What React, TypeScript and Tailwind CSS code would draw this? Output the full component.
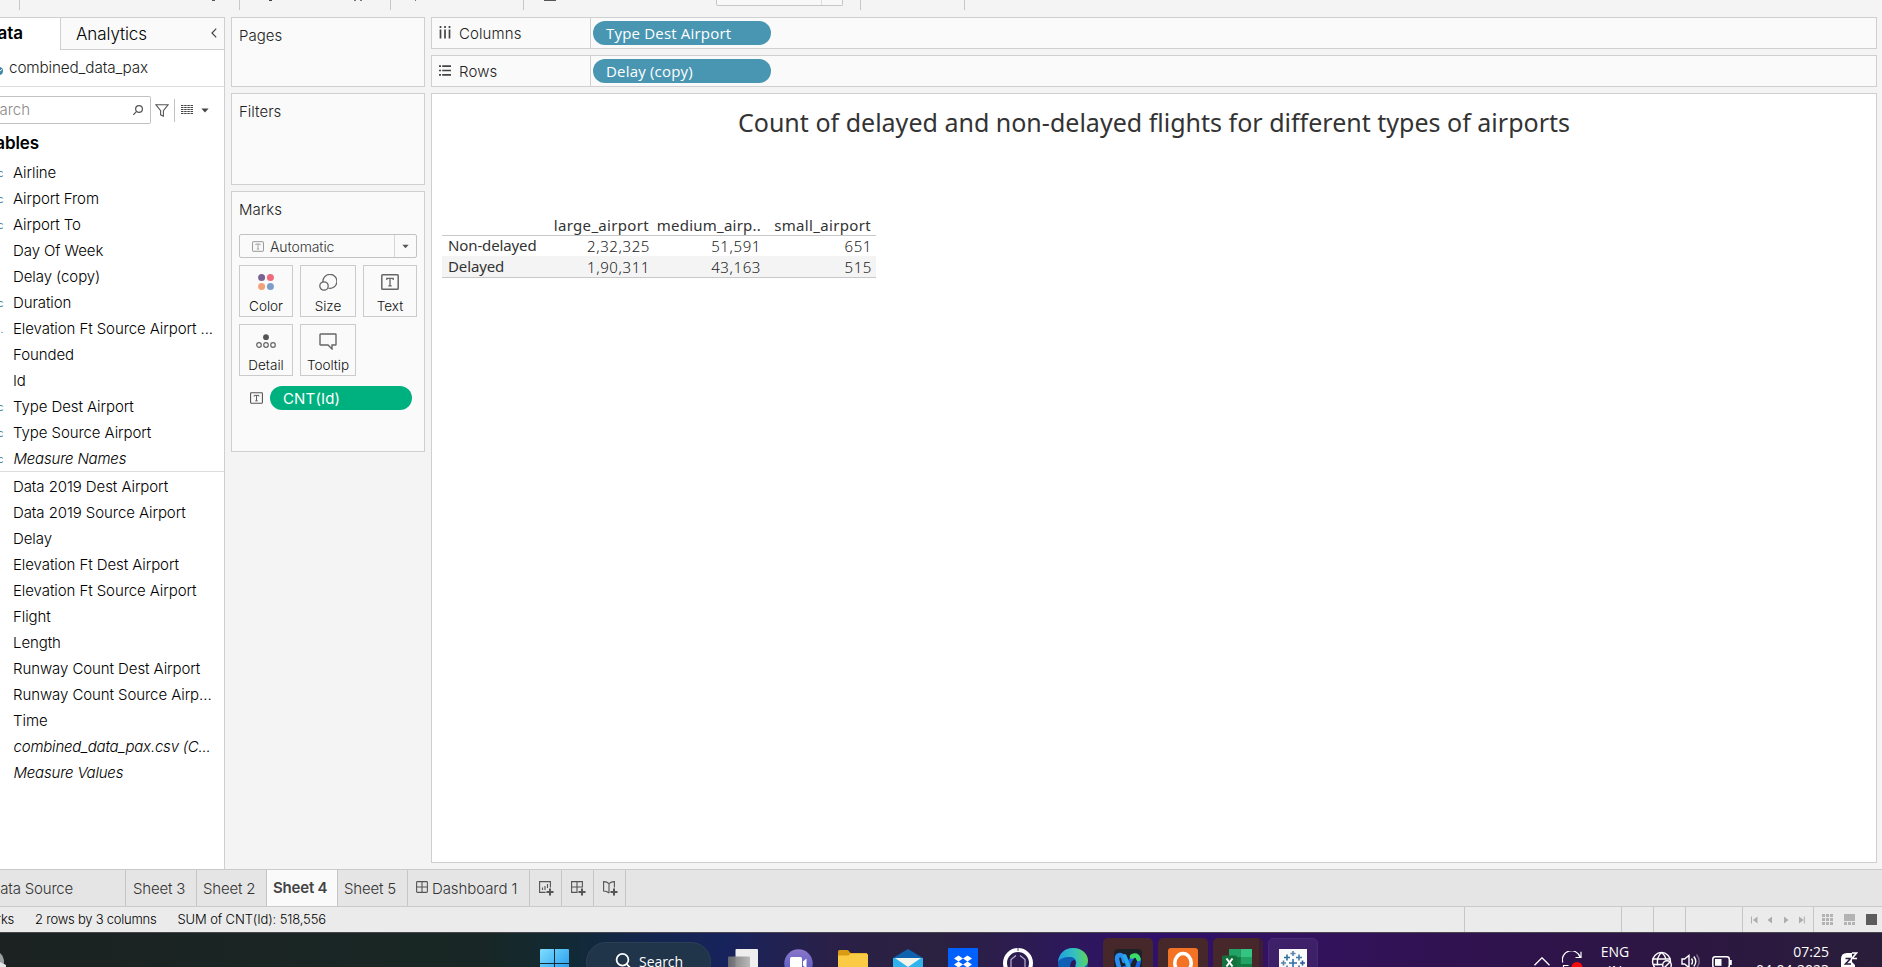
import type { ReactNode } from 'react';

type Field = { name: string; mark?: string; italic?: boolean };

const dimensions: Field[] = [
  { name: 'Airline', mark: 'Abc' },
  { name: 'Airport From', mark: 'Abc' },
  { name: 'Airport To', mark: 'Abc' },
  { name: 'Day Of Week' },
  { name: 'Delay (copy)' },
  { name: 'Duration', mark: 'Abc' },
  { name: 'Elevation Ft Source Airport ...', mark: '.' },
  { name: 'Founded' },
  { name: 'Id' },
  { name: 'Type Dest Airport', mark: 'Abc' },
  { name: 'Type Source Airport', mark: 'Abc' },
  { name: 'Measure Names', mark: 'Abc', italic: true },
];

const measures: Field[] = [
  { name: 'Data 2019 Dest Airport' },
  { name: 'Data 2019 Source Airport' },
  { name: 'Delay' },
  { name: 'Elevation Ft Dest Airport' },
  { name: 'Elevation Ft Source Airport' },
  { name: 'Flight' },
  { name: 'Length' },
  { name: 'Runway Count Dest Airport' },
  { name: 'Runway Count Source Airp...' },
  { name: 'Time' },
  { name: 'combined_data_pax.csv (C...', italic: true },
  { name: 'Measure Values', italic: true },
];

function FieldRow({ name, mark, italic }: Field) {
  return (
    <div className="flex h-[26px] items-center pt-[2px] whitespace-nowrap">
      <span className="flex w-[3.5px] shrink-0 justify-end text-[10px] text-[#3f7d98]">{mark}</span>
      <span
        className={
          italic
            ? 'ml-[10px] text-[15px] font-light italic tracking-[-0.2px] text-black'
            : 'ml-[9.5px] text-[15px] font-light tracking-[-0.08px] text-black'
        }
      >
        {name}
      </span>
    </div>
  );
}

function TextMark({ className, color }: { className: string; color: string }) {
  return (
    <svg viewBox="0 0 18 16" className={className} fill="none" stroke={color}>
      <rect x="0.8" y="0.8" width="16.4" height="14.4" rx="0.8" strokeWidth="1.5" />
      <path d="M5.8 6V4.4h6.4V6M9 4.4v7.4M7.3 11.9h3.4" strokeWidth="1.3" />
    </svg>
  );
}

function MarkButton({ label, wide, children }: { label: string; wide?: boolean; children: ReactNode }) {
  return (
    <div
      className={
        (wide ? 'w-[56px]' : 'w-[54px]') +
        ' flex h-[52px] flex-col items-center border border-[#cbcbcb] bg-[#fafafa]'
      }
    >
      <div className="flex h-[32px] items-center">{children}</div>
      <div className="text-[13.5px] leading-[17px] font-light text-[#111]">{label}</div>
    </div>
  );
}

function Shelf({ label, pill, icon }: { label: string; pill: string; icon: ReactNode }) {
  return (
    <div className="flex h-[32px] border border-[#cfcfcf] bg-[#fafafa]">
      <div className="flex w-[159px] items-center border-r border-[#cfcfcf] pl-[7px]">
        {icon}
        <span className="ml-[8px] pt-[2px] text-[15px] font-light tracking-[0.1px] text-[#222]">{label}</span>
      </div>
      <div className="ml-[2px] mt-[3px] flex h-[24px] w-[178px] items-center rounded-full bg-[#4996b2] pl-[13px] pt-px font-['Open_Sans'] text-[15px] tracking-[0.19px] text-white">
        {pill}
      </div>
    </div>
  );
}

function SheetTab({ label, width }: { label: string; width: string }) {
  return (
    <div className={width + ' flex shrink-0 items-center border-r border-[#c6c6c6] pt-[2px]'}>{label}</div>
  );
}

function Slot({ children, tile }: { children: ReactNode; tile?: string }) {
  return (
    <div className={(tile ?? '') + ' flex h-[50px] w-[50px] shrink-0 justify-center rounded-[5px] pt-[10px]'}>
      {children}
    </div>
  );
}

function Plus({ x, y, s, color }: { x: number; y: number; s: number; color: string }) {
  return <path d={`M${x - s} ${y}H${x + s}M${x} ${y - s}V${y + s}`} stroke={color} strokeWidth="1.6" />;
}

function ToolbarStrip() {
  return (
    <div className="flex h-[17px] shrink-0 items-start">
      <div className="h-[10px] w-[20px] border-r border-[#c8c8c8]" />
      <div className="ml-[192px] h-px w-[3px] bg-[#555]" />
      <div className="h-[10px] w-[25px] border-r border-[#c8c8c8]" />
      <div className="ml-[29px] h-px w-[3px] bg-[#444]" />
      <div className="ml-[82px] h-px w-[2px] bg-[#777]" />
      <div className="ml-[4px] h-px w-[2px] bg-[#777]" />
      <div className="h-[10px] w-[29px] border-r border-[#c8c8c8]" />
      <div className="ml-[24px] h-px w-px bg-[#777]" />
      <div className="h-[10px] w-[108px] border-r border-[#c8c8c8]" />
      <div className="ml-[20px] h-px w-[12px] bg-[#555]" />
      <div className="ml-[160px] flex h-[6px] w-[127px] rounded-b-[2px] border border-t-0 border-[#c6c6c6] bg-[#f8f8f8]">
        <div className="w-[105px] border-r border-[#ddd]" />
      </div>
      <div className="h-[10px] w-[18px] border-r border-[#c8c8c8]" />
      <div className="h-[10px] w-[104px] border-r border-[#c8c8c8]" />
    </div>
  );
}

function DataPane() {
  return (
    <div className="flex w-[225px] shrink-0 flex-col overflow-hidden border-t border-r border-[#cfcfcf] bg-white">
      <div className="flex h-[32px] shrink-0">
        <div className="flex w-[60px] items-center">
          <div className="flex w-[23px] justify-end text-[17px] font-semibold text-black">Data</div>
        </div>
        <div className="flex flex-1 items-center justify-between border-b border-l border-[#cfcfcf] bg-[#fafafa] pr-[7px] pl-[15px]">
          <span className="pt-[2px] text-[17px] font-light tracking-[-0.1px] text-black">Analytics</span>
          <svg viewBox="0 0 6 10" className="mb-[1px] h-[10px] w-[6px]" fill="none" stroke="#444" strokeWidth="1.2">
            <path d="M5.2 0.6L1 5l4.2 4.4" />
          </svg>
        </div>
      </div>
      <div className="flex h-[37px] shrink-0 items-center border-b border-[#dcdcdc]">
        <svg viewBox="0 0 4 8" className="mt-[5px] h-[8px] w-[4px]">
          <circle cx="-1" cy="4" r="4" fill="#3f87a6" />
          <path d="M0 4l2-1.6" stroke="#fff" />
        </svg>
        <span className="ml-[5px] text-[15.3px] font-light tracking-[-0.15px] text-[#222]">combined_data_pax</span>
      </div>
      <div className="mt-[9px] flex h-[28px] shrink-0 items-center">
        <div className="flex h-[28px] w-[151px] items-center rounded-r-[2px] border border-l-0 border-[#c2c2c2]">
          <div className="flex w-[30px] justify-end text-[15px] font-light text-[#8a8a8a]">Search</div>
          <svg viewBox="0 0 10 10" className="ml-[103px] h-[10px] w-[10px] overflow-visible" fill="none" stroke="#555" strokeWidth="1.2">
            <circle cx="6" cy="4" r="3.4" />
            <path d="M3.6 6.4L0.3 9.8" />
          </svg>
        </div>
        <svg viewBox="0 0 14 13" className="ml-[3.5px] h-[13px] w-[14px]" fill="none" stroke="#555" strokeWidth="1.1">
          <path d="M0.8 0.7h12.4L8.4 6.6v5.6l-2.8-1.4V6.6z" />
        </svg>
        <div className="ml-[5.5px] h-[23px] w-px bg-[#c2c2c2]" />
        <svg viewBox="0 0 12 10" className="ml-[6px] h-[10px] w-[12px]" stroke="#444" strokeWidth="1">
          <path d="M0 .5h12M0 2.5h12M0 4.5h12M0 6.5h12M0 8.5h12" strokeDasharray="2.5 0.67" />
        </svg>
        <svg viewBox="0 0 8 5" className="ml-[8px] h-[5px] w-[8px]" fill="#444">
          <path d="M0.4 0.4h7.2L4 4.6z" />
        </svg>
      </div>
      <div className="mt-[6px] flex h-[28px] w-[39px] shrink-0 items-center justify-end text-[17px] font-semibold tracking-[-0.1px] text-black">
        Tables
      </div>
      <div className="mt-[1px]">
        {dimensions.map((f) => (
          <FieldRow key={f.name} {...f} />
        ))}
      </div>
      <div className="border-t border-[#dcdcdc] pt-px">
        {measures.map((f) => (
          <FieldRow key={f.name} {...f} />
        ))}
      </div>
    </div>
  );
}

function CardTitle({ children }: { children: ReactNode }) {
  return <div className="text-[15px] leading-[20px] font-light text-[#222]">{children}</div>;
}

function CardsColumn() {
  return (
    <div className="ml-[6px] flex w-[194px] shrink-0 flex-col">
      <div className="h-[70px] border border-[#cfcfcf] bg-[#fafafa] pt-[8px] pl-[7px]">
        <CardTitle>Pages</CardTitle>
      </div>
      <div className="mt-[6px] h-[92px] border border-[#cfcfcf] bg-[#fafafa] pt-[8px] pl-[7px]">
        <CardTitle>Filters</CardTitle>
      </div>
      <div className="mt-[6px] h-[261px] border border-[#cfcfcf] bg-[#fafafa] pt-[8px] pl-[7px]">
        <CardTitle>Marks</CardTitle>
        <div className="mt-[14px] flex h-[24px] w-[178px] items-center rounded-[2px] border border-[#c2c2c2]">
          <TextMark className="ml-[12px] h-[11px] w-[12px]" color="#999" />
          <span className="ml-[6px] flex-1 text-[14px] font-light tracking-[-0.1px] text-[#333]">Automatic</span>
          <div className="flex h-full w-[22px] items-center justify-center border-l border-[#d6d6d6]">
            <svg viewBox="0 0 8 5" className="h-[5px] w-[7px]" fill="#555">
              <path d="M0.4 0.4h7.2L4 4.6z" />
            </svg>
          </div>
        </div>
        <div className="mt-[7px] flex w-[178px] justify-between">
          <MarkButton label="Color">
            <svg viewBox="0 0 16 16" className="h-[16px] w-[16px]">
              <circle cx="3.6" cy="3.6" r="3.5" fill="#7b6391" />
              <circle cx="12.4" cy="3.6" r="3.5" fill="#ee6a7c" />
              <circle cx="3.6" cy="12.4" r="3.5" fill="#f3a178" />
              <circle cx="12.4" cy="12.4" r="3.5" fill="#7b9dc8" />
            </svg>
          </MarkButton>
          <MarkButton label="Size" wide>
            <svg viewBox="0 0 18 17" className="h-[17px] w-[18px]" fill="none" stroke="#666" strokeWidth="1.3">
              <path d="M4 8.4A7 7 0 1 1 9.4 14.2" />
              <circle cx="5" cy="12" r="4.2" />
            </svg>
          </MarkButton>
          <MarkButton label="Text">
            <TextMark className="h-[16px] w-[18px]" color="#666" />
          </MarkButton>
        </div>
        <div className="mt-[7px] flex gap-[7px]">
          <MarkButton label="Detail">
            <svg viewBox="0 0 20 15" className="h-[15px] w-[20px]" fill="none" stroke="#666" strokeWidth="1.2">
              <circle cx="10" cy="3.2" r="2.9" fill="#555" stroke="none" />
              <circle cx="3" cy="11" r="2.3" />
              <circle cx="10" cy="11" r="2.3" />
              <circle cx="17" cy="11" r="2.3" />
            </svg>
          </MarkButton>
          <MarkButton label="Tooltip" wide>
            <svg viewBox="0 0 18 17" className="h-[17px] w-[18px]" fill="none" stroke="#666" strokeWidth="1.4">
              <path d="M1.5 1h15q.5 0 .5.5v10q0 .5-.5.5H13v4l-4-4H1.5q-.5 0-.5-.5v-10q0-.5.5-.5z" />
            </svg>
          </MarkButton>
        </div>
        <div className="mt-[10px] flex items-center">
          <TextMark className="ml-[11px] h-[12px] w-[13px]" color="#555" />
          <div className="ml-[7px] flex h-[24px] w-[142px] items-center rounded-full bg-[#00b180] pt-[2px] pl-[13px] text-[15px] tracking-[0.15px] text-white">
            CNT(Id)
          </div>
        </div>
      </div>
    </div>
  );
}

function Crosstab() {
  return (
    <div className="ml-[10px] w-[434px] font-['Noto_Sans'] text-[#333]">
      <div className="flex h-[19px] items-center border-b border-[#c8c8c8] pb-[2px] text-[15px] leading-[16px]">
        <span className="w-[207px] text-right tracking-[0.32px]">large_airport</span>
        <span className="w-[112px] text-right tracking-[0.22px]">medium_airp..</span>
        <span className="w-[110px] text-right tracking-[0.34px]">small_airport</span>
      </div>
      {[
        ['Non-delayed', '2,32,325', '51,591', '651'],
        ['Delayed', '1,90,311', '43,163', '515'],
      ].map(([head, a, b, c], i) => (
        <div
          key={head}
          className={
            (i === 1 ? 'border-b border-[#c8c8c8] bg-[#f4f4f4] h-[22px] ' : 'h-[20px] ') +
            'flex items-center text-[15px] leading-[20px]'
          }
        >
          <span className="w-[107px] pb-[2px] pl-[6px] tracking-[-0.12px]">{head}</span>
          <span className="w-[101px] text-right font-light tracking-[0.6px] text-[#222]">{a}</span>
          <span className="w-[111px] text-right font-light tracking-[0.6px] text-[#222]">{b}</span>
          <span className="w-[111px] text-right font-light tracking-[0.6px] text-[#222]">{c}</span>
        </div>
      ))}
    </div>
  );
}

function Worksheet() {
  return (
    <div className="mr-[5px] mb-[6px] ml-[6px] flex flex-1 flex-col">
      <Shelf
        label="Columns"
        pill="Type Dest Airport"
        icon={
          <svg viewBox="0 0 12 13" className="mb-[2px] h-[13px] w-[12px]" stroke="#444" strokeWidth="1.7">
            <path d="M1.5 0v2M6 0v2M10.5 0v2M1.5 3.5v9M6 3.5v9M10.5 3.5v9" />
          </svg>
        }
      />
      <div className="h-[6px]" />
      <Shelf
        label="Rows"
        pill="Delay (copy)"
        icon={
          <svg viewBox="0 0 12 11" className="mb-[2px] h-[11px] w-[12px]" stroke="#444" strokeWidth="1.7">
            <path d="M0 1.2h2M0 5.5h2M0 9.8h2M3.2 1.2H12M3.2 5.5H12M3.2 9.8H12" />
          </svg>
        }
      />
      <div className="mt-[6px] flex flex-1 flex-col border border-[#cfcfcf] bg-white">
        <div className="mt-[11px] text-center font-['Noto_Sans'] text-[25px] leading-[34px] tracking-[0.01px] text-[#333]">
          Count of delayed and non-delayed flights for different types of airports
        </div>
        <div className="h-[78px]" />
        <Crosstab />
      </div>
    </div>
  );
}

function SheetTabs() {
  return (
    <div className="flex h-[38px] shrink-0 border-t border-b border-[#cacaca] bg-[#e5e5e5] text-[15px] font-light tracking-[-0.2px] whitespace-nowrap text-[#333]">
      <div className="flex w-[126px] shrink-0 items-center border-r border-[#c6c6c6]">
        <div className="flex w-[73px] justify-end pt-[2px]">Data Source</div>
      </div>
      <SheetTab label="Sheet 3" width="w-[71px] pl-[7px]" />
      <SheetTab label="Sheet 2" width="w-[70px] pl-[6px]" />
      <div className="flex w-[71px] shrink-0 items-center border-r border-[#c6c6c6] bg-[#fafafa] pl-[6px] text-[15px] font-semibold text-[#444]">
        Sheet 4
      </div>
      <SheetTab label="Sheet 5" width="w-[70px] pl-[6px]" />
      <div className="flex w-[122px] shrink-0 items-center border-r border-[#c6c6c6] pl-[8px]">
        <svg viewBox="0 0 12 12" className="mb-[2px] h-[12px] w-[12px]" fill="none" stroke="#555" strokeWidth="1.1">
          <rect x="0.6" y="0.6" width="10.8" height="10.8" rx="0.8" />
          <path d="M6 .6v10.8M.6 6h10.8" />
        </svg>
        <span className="ml-[4px] pt-[2px] tracking-[-0.08px]">Dashboard 1</span>
      </div>
      <div className="flex w-[32px] shrink-0 items-center justify-center border-r border-[#c6c6c6] pl-[2px]">
        <svg viewBox="0 0 15 15" className="h-[15px] w-[15px]" fill="none" stroke="#555" strokeWidth="1.1">
          <path d="M11.4 6.5V.6H.6v10.8h6M3.5 9V6.5M6 9V5M8.5 7V3" />
          <path d="M11 7.5v7M7.5 11h7" strokeWidth="2" />
        </svg>
      </div>
      <div className="flex w-[32px] shrink-0 items-center justify-center border-r border-[#c6c6c6] pl-[2px]">
        <svg viewBox="0 0 15 15" className="h-[15px] w-[15px]" fill="none" stroke="#555" strokeWidth="1.1">
          <path d="M11.4 6.5V.6H.6v10.8h6M6 .6v10.8M.6 6h10.8" />
          <path d="M11 7.5v7M7.5 11h7" strokeWidth="2" />
        </svg>
      </div>
      <div className="flex w-[32px] shrink-0 items-center justify-center border-r border-[#c6c6c6] pl-[2px]">
        <svg viewBox="0 0 15 15" className="h-[15px] w-[15px]" fill="none" stroke="#555" strokeWidth="1.1">
          <path d="M11.4 6.5V.6Q8 .6 6 2.6 4 .6.6.6v9.4Q4 10 6 12M6 2.6V12" />
          <path d="M11 7.5v7M7.5 11h7" strokeWidth="2" />
        </svg>
      </div>
    </div>
  );
}

function StatusBar() {
  return (
    <div className="flex h-[25px] shrink-0 bg-[#ebebeb] text-[13px] font-light tracking-[-0.23px] whitespace-nowrap text-black">
      <div className="flex w-[14px] items-center justify-end">marks</div>
      <div className="ml-[21px] flex items-center">2 rows by 3 columns</div>
      <div className="ml-[21px] flex items-center tracking-[-0.13px]">SUM of CNT(Id): 518,556</div>
      <div className="flex-1" />
      <div className="w-[157px] border-l border-[#c6c6c6]" />
      <div className="w-[32px] border-l border-[#c6c6c6]" />
      <div className="w-[32px] border-l border-[#c6c6c6]" />
      <div className="w-[57px] border-l border-[#c6c6c6]" />
      <div className="flex w-[71px] items-center border-l border-[#c6c6c6] pl-[8px]">
        <svg viewBox="0 0 55 8" className="h-[8px] w-[55px]" fill="#adadad">
          <path d="M0 .5h1v7H0zM6.5.5v7L2 4zM21 .5v7L16.5 4zM33 .5v7L37.5 4zM48 .5v7L52.5 4zM52.8.5h1v7h-1z" />
        </svg>
      </div>
      <div className="flex w-[69px] items-center gap-[11px] border-l border-[#c6c6c6] pl-[8px]">
        <svg viewBox="0 0 11 11" className="h-[11px] w-[11px]" fill="#b3b3b3">
          <path d="M0 0h3v3H0zM4 0h3v3H4zM8 0h3v3H8zM0 4h3v3H0zM4 4h3v3H4zM8 4h3v3H8zM0 8h3v3H0zM4 8h3v3H4zM8 8h3v3H8z" />
        </svg>
        <svg viewBox="0 0 11 11" className="h-[11px] w-[11px]" fill="#b3b3b3">
          <path d="M0 0h11v7H0zM0 8h3v3H0zM4 8h3v3H4zM8 8h3v3H8z" />
        </svg>
        <div className="h-[11px] w-[11px] bg-[#5c5c5c]" />
      </div>
    </div>
  );
}

function Taskbar() {
  return (
    <div className="flex h-[36px] shrink-0 items-start overflow-hidden border-t border-[#4a4650] bg-[linear-gradient(90deg,#1c2222_0px,#182725_480px,#112a35_570px,#13264c_640px,#17235c_725px,#2a2048_830px,#2b2140_940px,#2c1a55_1040px,#30116a_1150px,#33125e_1300px,#301250_1450px,#2c1741_1700px,#291e3a_1882px)] pt-[5px]">
      <div className="w-[529px] shrink-0">
        <svg viewBox="0 0 6 30" className="mt-[11px] h-[30px] w-[6px]">
          <circle cx="-8" cy="13" r="12" fill="#9a9fa3" />
          <path d="M0 13l6 3v14H0z" fill="#e4e6e8" />
        </svg>
      </div>
      <Slot>
        <svg viewBox="0 0 29 29" className="mt-px h-[29px] w-[29px]">
          <defs>
            <linearGradient id="win" x1="0" y1="0" x2="1" y2="1">
              <stop offset="0" stopColor="#7fdcff" />
              <stop offset="1" stopColor="#1493ea" />
            </linearGradient>
          </defs>
          <path fill="url(#win)" d="M1 0h13v14H0V1q0-1 1-1zM15 0h13q1 0 1 1v13H15zM0 15h14v14H0zM15 15h14v14H15z" />
        </svg>
      </Slot>
      <div className="mt-[4px] ml-[7px] flex h-[40px] w-[125px] shrink-0 rounded-full border border-[#2c4055] bg-[#20344a] pt-[10px] pl-[28px]">
        <svg viewBox="0 0 16 17" className="h-[17px] w-[16px]" fill="none" stroke="#fff" strokeWidth="1.8">
          <circle cx="7.5" cy="6.8" r="5.9" />
          <path d="M11.6 11l3.8 4" />
        </svg>
        <span className="ml-[8px] font-['Open_Sans'] text-[14px] leading-[17px] tracking-[-0.05px] text-white">Search</span>
      </div>
      <div className="ml-[7px] flex gap-[5px]">
        <Slot>
          <svg viewBox="0 0 30 30" className="mt-px h-[30px] w-[30px]">
            <defs>
              <linearGradient id="tv" x1="0" y1="0" x2="1" y2="0">
                <stop offset="0" stopColor="#6f6f6f" />
                <stop offset="1" stopColor="#b4b4b4" />
              </linearGradient>
            </defs>
            <rect x="7.5" y="0" width="22.5" height="24" rx="1" fill="#eeeeee" />
            <rect x="0" y="7.5" width="22" height="22" rx="1" fill="url(#tv)" opacity="0.92" />
          </svg>
        </Slot>
        <Slot>
          <svg viewBox="0 0 29 29" className="mt-px h-[29px] w-[29px]">
            <defs>
              <linearGradient id="chat" x1="0" y1="0" x2="0" y2="1">
                <stop offset="0" stopColor="#8c76c9" />
                <stop offset="1" stopColor="#4b57c4" />
              </linearGradient>
            </defs>
            <circle cx="14.5" cy="14.5" r="14.2" fill="url(#chat)" />
            <rect x="6" y="8" width="12" height="13" rx="1.5" fill="#fff" />
            <path d="M19 12.5l3.5-3v10l-3.5-3z" fill="#fff" />
          </svg>
        </Slot>
        <Slot>
          <svg viewBox="0 0 30 28" className="mt-[2px] h-[28px] w-[30px]">
            <path d="M0 1.5Q0 0 1.5 0H9q1 0 1.7.8L12.5 3H29v8H0z" fill="#d99a14" />
            <path d="M0 5.5h10.5l2-2H28.5q1.5 0 1.5 1.5v23H0z" fill="#fccb45" />
            <path d="M7 17h17v10H7z" fill="#e7a92a" />
          </svg>
        </Slot>
        <Slot>
          <svg viewBox="0 0 30 30" className="mt-px h-[30px] w-[30px]">
            <path d="M0 9L15 0l15 9v4H0z" fill="#0f62ae" />
            <path d="M0 9h30v21H0z" fill="#2eb3ee" />
            <path d="M2 9h26L15 18z" fill="#f2f4ea" />
          </svg>
        </Slot>
        <Slot>
          <svg viewBox="0 0 30 30" className="h-[30px] w-[30px]">
            <path d="M0 0h30v30H0z" fill="#0061fe" />
            <path
              d="M10.5 7.5l4.5 3-4.5 3-4.5-3zM19.5 7.5l4.5 3-4.5 3-4.5-3zM10.5 13.5l4.5 3-4.5 3-4.5-3zM19.5 13.5l4.5 3-4.5 3-4.5-3z"
              fill="#fff"
            />
          </svg>
        </Slot>
        <Slot>
          <svg viewBox="0 0 30 30" className="h-[30px] w-[30px]" fill="none">
            <circle cx="15" cy="15" r="13" stroke="#fff" strokeWidth="4" />
            <path d="M8 26V11.500L13 7.500M22 26V11.500L17 7.500" stroke="#b9b2cc" strokeWidth="1.2" />
            <path d="M15 0v3" stroke="#2c1a55" strokeWidth="0.8" />
          </svg>
        </Slot>
        <Slot>
          <svg viewBox="0 0 30 30" className="h-[30px] w-[30px]">
            <defs>
              <linearGradient id="edge" x1="0" y1="0.3" x2="1" y2="0.2">
                <stop offset="0" stopColor="#1f9fe0" />
                <stop offset="0.55" stopColor="#35c1c0" />
                <stop offset="1" stopColor="#63d34f" />
              </linearGradient>
            </defs>
            <circle cx="15" cy="15" r="15" fill="#0f5fb4" />
            <path d="M0 14C1 5 7 0 15 0c9 0 15 6 15 12.5 0 5-4 7.5-8 7.5-4.500 0-5-2-4-4 1-3-1-7-6-7-6 0-11 2-12 5z" fill="url(#edge)" />
            <path d="M12 20c0-5 2-8 4.500-8 1.500 2 1.500 3 .8 5-.8 2 .5 4 3.700 4l-1 5z" fill="#2b1958" />
          </svg>
        </Slot>
        <Slot tile="bg-[#46282a]">
          <svg viewBox="0 0 30 30" className="h-[30px] w-[30px]" fill="none" strokeLinecap="round">
            <rect x="1" y="1" width="28" height="29" rx="4" fill="#1d2229" />
            <path d="M15 19q-3 5-6 4T4 11q0-4 3-4t4 6" stroke="#2a8df0" strokeWidth="4.5" />
            <path d="M11 20c4 2 6-12 11-12 4 0 5 4 3 9-1 4-3 7-6 7-4 0-4-8-7-15" stroke="#1766e8" strokeWidth="4" />
            <path d="M19 8.500q5-3 6.500 2.500" stroke="#3ddc6a" strokeWidth="4.5" />
            <path d="M11.500 8l4 10" stroke="#28a9e8" strokeWidth="4" />
          </svg>
        </Slot>
        <Slot tile="bg-[#46282a]">
          <svg viewBox="0 0 30 30" className="h-[30px] w-[30px]">
            <rect width="30" height="30" rx="3" fill="#f47223" />
            <ellipse cx="15" cy="15" rx="8.2" ry="9.5" fill="none" stroke="#fff" strokeWidth="3.5" />
          </svg>
        </Slot>
        <div className="flex rounded-[5px] border-r-4 border-[#3d1f35] bg-[#46282a]">
          <div className="flex h-[50px] w-[46px] justify-center pt-[11px]">
            <svg viewBox="0 0 30 29" className="ml-[2px] h-[29px] w-[30px]">
              <rect x="7" y="0" width="11.5" height="29" fill="#21a366" />
              <rect x="18.5" y="0" width="11.5" height="8" fill="#33c481" />
              <rect x="18.5" y="8" width="11.5" height="7" fill="#21a366" />
              <rect x="7" y="8" width="11.5" height="21" fill="#107c41" />
              <rect x="18.5" y="15" width="11.5" height="14" fill="#107c41" />
              <rect x="0" y="6.5" width="15" height="17" rx="1.5" fill="#14713c" />
              <path d="M4.500 9.500l6 8M10.500 9.500l-6 8" stroke="#fff" strokeWidth="2" />
            </svg>
          </div>
        </div>
        <Slot tile="border border-[#47297a] bg-[#3d2068]">
          <svg viewBox="0 0 28 28" className="h-[28px] w-[28px]" fill="none">
            <path d="M0 0h28v28H0z" fill="#fafafa" />
            <Plus x={14} y={14} s={4} color="#2e6fa8" />
            <Plus x={14} y={4.5} s={2.5} color="#5b83a8" />
            <Plus x={8} y={8.5} s={3} color="#2f6f9e" />
            <Plus x={20} y={8.5} s={3} color="#3d7aa8" />
            <Plus x={4.5} y={14} s={2.5} color="#5b83a8" />
            <Plus x={23.5} y={14} s={2.5} color="#2b5a94" />
            <Plus x={8} y={19.5} s={3} color="#3d7aa8" />
            <Plus x={20} y={19.5} s={3} color="#2f6f9e" />
          </svg>
        </Slot>
      </div>
      <div className="flex-1" />
      <div className="flex w-[348px] shrink-0 items-start font-['Open_Sans'] text-[14px] text-white">
        <svg viewBox="0 0 16 9" className="mt-[19px] h-[9px] w-[16px]" fill="none" stroke="#fff" strokeWidth="1.3">
          <path d="M.5 8.300L8 .8l7.500 7.500" />
        </svg>
        <svg viewBox="0 0 21 21" className="mt-[13px] ml-[12px] h-[21px] w-[21px]" fill="none" stroke="#fff" strokeWidth="1.2">
          <path d="M.8 11.500A9 9 0 0 1 18 6M19 .8V6.500h-5.500M1.500 20v-5.500h5" />
          <circle cx="15" cy="16.5" r="5.5" fill="#f90b0b" stroke="none" />
        </svg>
        <div className="ml-[15px] w-[34px] text-center leading-[19px]">
          <div className="pt-[4px]">ENG</div>
          <div>IN</div>
        </div>
        <svg viewBox="0 0 21 21" className="mt-[13px] ml-[19px] h-[21px] w-[21px]" fill="none" stroke="#fff" strokeWidth="1.4">
          <circle cx="10.5" cy="10.5" r="9" />
          <path d="M1.500 8h18M2 13.500h9M10.500 1.500q-5 4-4 13M10.500 1.500q4 3 4.300 7" />
          <circle cx="16" cy="14" r="4.3" fill="#2c1741" />
          <path d="M13 17l6-6" />
        </svg>
        <svg viewBox="0 0 20 16" className="mt-[15px] ml-[9px] h-[16px] w-[20px]" fill="none" stroke="#fff" strokeWidth="1.4">
          <path d="M1 6v5h2.500L8 14.500v-12L3.500 6zM10.500 5.500q2 3 0 6M12.800 3.500q4 5 0 10" />
          <path d="M15.500 1.500q5.500 7 0 13.500" opacity="0.35" />
        </svg>
        <svg viewBox="0 0 21 13" className="mt-[18px] ml-[11px] h-[13px] w-[21px]" fill="none" stroke="#fff" strokeWidth="1.5">
          <rect x=".8" y=".8" width="16.5" height="11" rx="2.5" />
          <rect x="3" y="3" width="6.5" height="6.8" fill="#fff" stroke="none" />
          <path d="M18.800 4v5" strokeWidth="2" />
        </svg>
        <div className="ml-[17px] w-[79px] text-right leading-[19px]">
          <div className="pt-[4px]">07:25</div>
          <div className="leading-[18px]">04-04-2023</div>
        </div>
        <svg viewBox="0 0 18 18" className="mt-[14px] ml-[11px] h-[18px] w-[18px]">
          <path d="M1 18V7q0-6 6-6h5v9l3 3v5z" fill="#fff" />
          <path d="M5.500 6.500h5l-5 5.500h5.500" fill="none" stroke="#2a1d3c" strokeWidth="1.6" />
          <path d="M12 1h4.500l-4.500 5.500h5" fill="none" stroke="#fff" strokeWidth="1.6" />
        </svg>
      </div>
    </div>
  );
}

export default function App() {
  return (
    <div className="flex h-[967px] w-[1882px] flex-col overflow-hidden bg-[#f4f4f4] font-['Inter',sans-serif]">
      <ToolbarStrip />
      <div className="flex h-[852px] shrink-0">
        <DataPane />
        <CardsColumn />
        <Worksheet />
      </div>
      <SheetTabs />
      <StatusBar />
      <Taskbar />
    </div>
  );
}
